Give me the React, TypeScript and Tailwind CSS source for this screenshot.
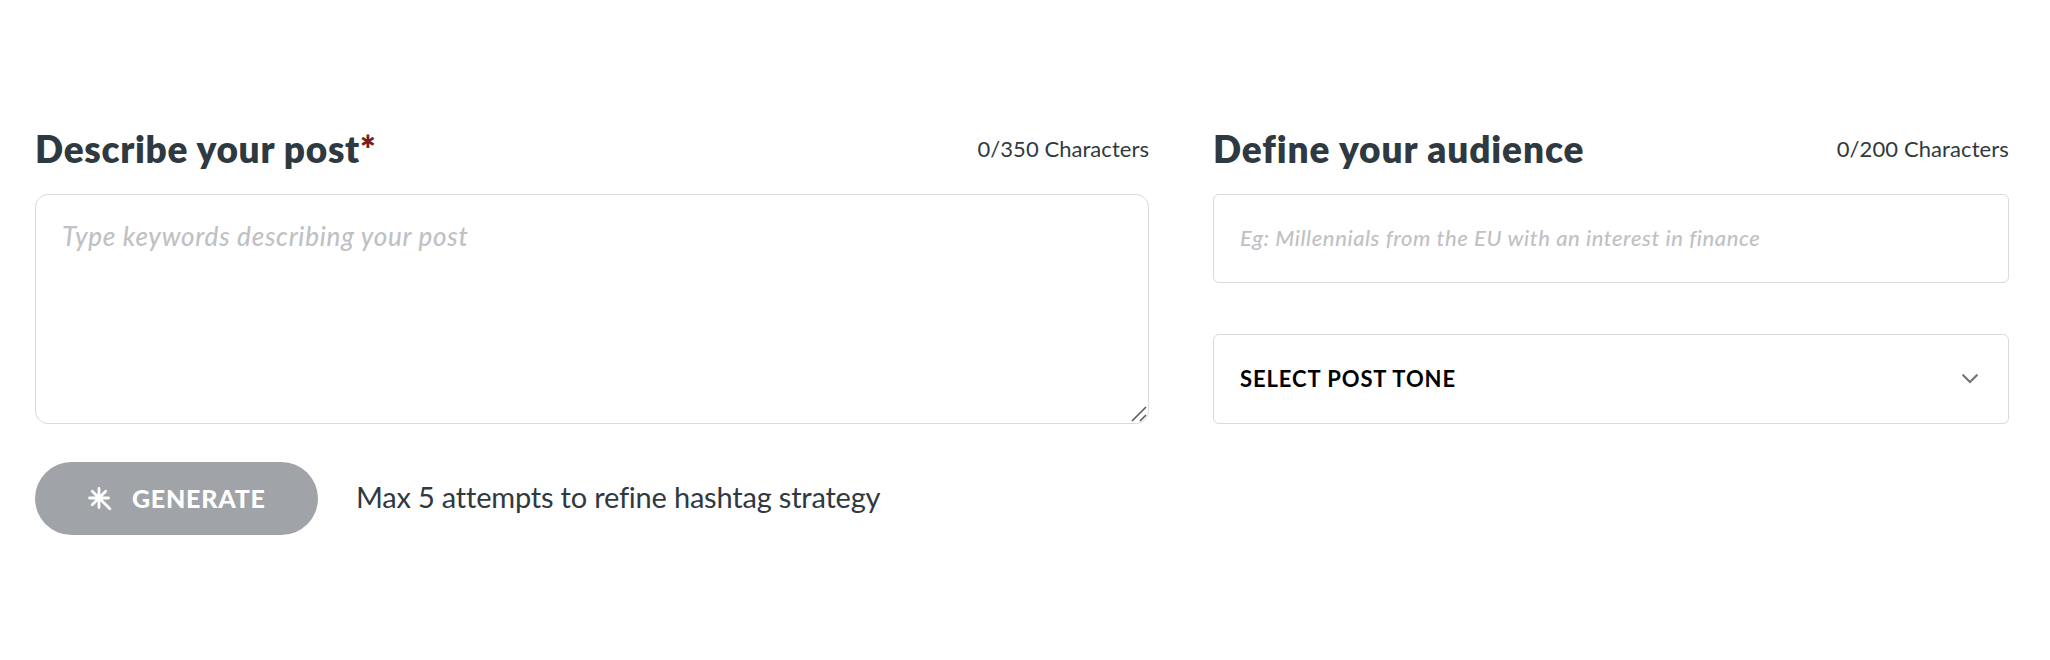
import React, { useState } from "react";

const MAX_POST = 350;
const MAX_AUDIENCE = 200;

function SparkIcon() {
  return (
    <svg
      width="24"
      height="24"
      viewBox="0 0 24 24"
      fill="none"
      stroke="currentColor"
      strokeWidth="2.8"
      strokeLinecap="round"
    >
      <path d="M11 1.500v19M1.500 11h19M4.300 4.300L21.800 21.800M17.700 4.300L4.300 17.700" />
    </svg>
  );
}

export default function App() {
  const [post, setPost] = useState("");
  const [audience, setAudience] = useState("");

  return (
    <div className="h-[660px] w-[2050px] bg-white pt-[126px] pl-[35px] font-['Lato',sans-serif] text-[#2f3941]">
      <form className="flex gap-[64px]" onSubmit={(e) => e.preventDefault()}>
        {/* Post */}
        <div className="w-[1114px]">
          <div className="flex h-12 items-center justify-between pb-[3px]">
            <label htmlFor="post" className="text-[37px] font-extrabold whitespace-nowrap tracking-[0.7px]">
              Describe your post<span className="text-[#75201d]">*</span>
            </label>
            <span className="text-[22px] whitespace-nowrap tracking-[0.05px]">{post.length}/{MAX_POST} Characters</span>
          </div>
          <div className="relative mt-5">
            <textarea
              id="post"
              maxLength={MAX_POST}
              className="block h-[230px] w-full resize-none rounded-[13px] border border-[#d9dadc] px-[26px] pt-[25px] text-[26px] leading-8 font-medium tracking-[0.75px] outline-none placeholder:text-[#bfc1c4] placeholder:italic"
              placeholder="Type keywords describing your post"
              value={post}
              onChange={(e) => setPost(e.target.value)}
            />
            <svg
              className="absolute right-[2px] bottom-[2px] text-[#5c5c5c]"
              width="16"
              height="16"
              viewBox="0 0 16 16"
              stroke="currentColor"
              strokeWidth="1.6"
            >
              <path d="M1 15L15 1M9 15L15 9" />
            </svg>
          </div>

          <div className="mt-[38px] flex items-center gap-[38px]">
            <button
              type="submit"
              className="flex h-[73px] w-[283px] items-center rounded-full bg-[#a0a3a7] pl-[53px] text-[25px] font-black tracking-[0.75px] text-white"
            >
              <SparkIcon />
              <span className="ml-5 whitespace-nowrap">GENERATE</span>
            </button>
            <p className="pb-[3px] text-[29px] whitespace-nowrap tracking-[-0.2px]">
              Max 5 attempts to refine hashtag strategy
            </p>
          </div>
        </div>

        {/* Audience and tone */}
        <div className="w-[796px]">
          <div className="flex h-12 items-center justify-between pb-[3px]">
            <label htmlFor="audience" className="text-[37px] font-extrabold whitespace-nowrap tracking-[0.9px]">
              Define your audience
            </label>
            <span className="text-[22px] whitespace-nowrap tracking-[0.1px]">{audience.length}/{MAX_AUDIENCE} Characters</span>
          </div>
          <input
            id="audience"
            maxLength={MAX_AUDIENCE}
            className="mt-5 block h-[89px] w-full rounded-md border border-[#d9dadc] px-[26px] pb-[3px] text-[22px] font-medium tracking-[0.57px] outline-none placeholder:text-[#bfc1c4] placeholder:italic"
            placeholder="Eg: Millennials from the EU with an interest in finance"
            value={audience}
            onChange={(e) => setAudience(e.target.value)}
          />
          <button
            type="button"
            className="mt-[51px] flex h-[90px] w-full items-center justify-between rounded-md border border-[#d9dadc] pr-[30px] pl-[26px] text-[22px] font-bold tracking-[0.9px] text-black"
          >
            <span className="pb-[2px] whitespace-nowrap">SELECT POST TONE</span>
            <svg
              className="text-[#757575]"
              width="16"
              height="10"
              viewBox="0 0 16 10"
              fill="none"
              stroke="currentColor"
              strokeWidth="2.2"
              strokeLinecap="round"
            >
              <path d="M1.200 1.200L8 8l6.800-6.800" />
            </svg>
          </button>
        </div>
      </form>
    </div>
  );
}
